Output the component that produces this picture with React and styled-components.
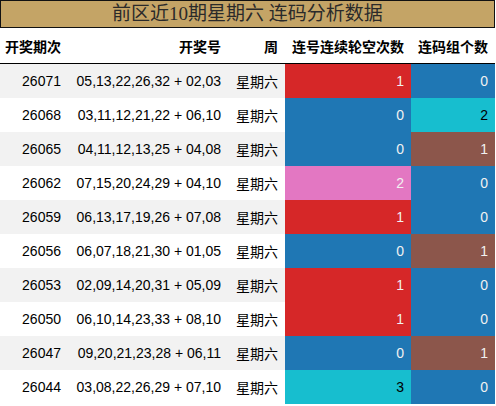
import React from "react";
import styled, { createGlobalStyle } from "styled-components";

const GlobalStyle = createGlobalStyle`
  html, body {
    margin: 0;
    padding: 0;
    background: #fff;
  }
  body {
    font-family: "Liberation Sans", "Noto Sans CJK SC", sans-serif;
  }
`;

const Wrap = styled.div`
  width: 495px;
`;

const Title = styled.div`
  height: 26px;
  border: 1px solid #111;
  background: #c4a466;
  color: #2a2a2a;
  font-family: "Liberation Serif", "Noto Sans CJK SC", serif;
  font-size: 19px;
  line-height: 26px;
  text-align: center;
`;

const Table = styled.table`
  width: 495px;
  border-collapse: collapse;
  table-layout: fixed;
  font-size: 14px;
`;

const Th = styled.th`
  height: 35px;
  padding: 0 7px 0 0;
  text-align: right;
  font-weight: bold;
  color: #000;
  font-family: "Noto Sans CJK SC", sans-serif;
  border-bottom: 1px solid #000;
  white-space: nowrap;
`;

const Row = styled.tr`
  background: ${(p) => (p.$odd ? "#f2f2f2" : "#fff")};
`;

const Td = styled.td`
  height: 34px;
  padding: 0 7px 0 0;
  text-align: right;
  color: #000;
  white-space: nowrap;
`;

const WeekTd = styled(Td)`
  font-family: "Noto Sans CJK SC", sans-serif;
`;

const ColorTd = styled(Td)`
  background: ${(p) => p.$bg};
  color: ${(p) => p.$fg};
`;

const gapColors = {
  0: ["#1f77b4", "#f1f1f1"],
  1: ["#d62728", "#f1f1f1"],
  2: ["#e377c2", "#f1f1f1"],
  3: ["#17becf", "#000"],
};

const groupColors = {
  0: ["#1f77b4", "#f1f1f1"],
  1: ["#8c564b", "#f1f1f1"],
  2: ["#17becf", "#000"],
};

const rows = [
  ["26071", "05,13,22,26,32 + 02,03", 1, 0],
  ["26068", "03,11,12,21,22 + 06,10", 0, 2],
  ["26065", "04,11,12,13,25 + 04,08", 0, 1],
  ["26062", "07,15,20,24,29 + 04,10", 2, 0],
  ["26059", "06,13,17,19,26 + 07,08", 1, 0],
  ["26056", "06,07,18,21,30 + 01,05", 0, 1],
  ["26053", "02,09,14,20,31 + 05,09", 1, 0],
  ["26050", "06,10,14,23,33 + 08,10", 1, 0],
  ["26047", "09,20,21,23,28 + 06,11", 0, 1],
  ["26044", "03,08,22,26,29 + 07,10", 3, 0],
];

export default function App() {
  return (
    <>
      <GlobalStyle />
      <Wrap>
        <Title>前区近10期星期六 连码分析数据</Title>
        <Table>
          <colgroup>
            <col style={{ width: 68 }} />
            <col style={{ width: 160 }} />
            <col style={{ width: 57 }} />
            <col style={{ width: 126 }} />
            <col style={{ width: 84 }} />
          </colgroup>
          <thead>
            <tr>
              <Th>开奖期次</Th>
              <Th>开奖号</Th>
              <Th>周</Th>
              <Th>连号连续轮空次数</Th>
              <Th>连码组个数</Th>
            </tr>
          </thead>
          <tbody>
            {rows.map((r, i) => (
              <Row key={r[0]} $odd={i % 2 === 0}>
                <Td>{r[0]}</Td>
                <Td>{r[1]}</Td>
                <WeekTd>星期六</WeekTd>
                <ColorTd $bg={gapColors[r[2]][0]} $fg={gapColors[r[2]][1]}>
                  {r[2]}
                </ColorTd>
                <ColorTd $bg={groupColors[r[3]][0]} $fg={groupColors[r[3]][1]}>
                  {r[3]}
                </ColorTd>
              </Row>
            ))}
          </tbody>
        </Table>
      </Wrap>
    </>
  );
}
